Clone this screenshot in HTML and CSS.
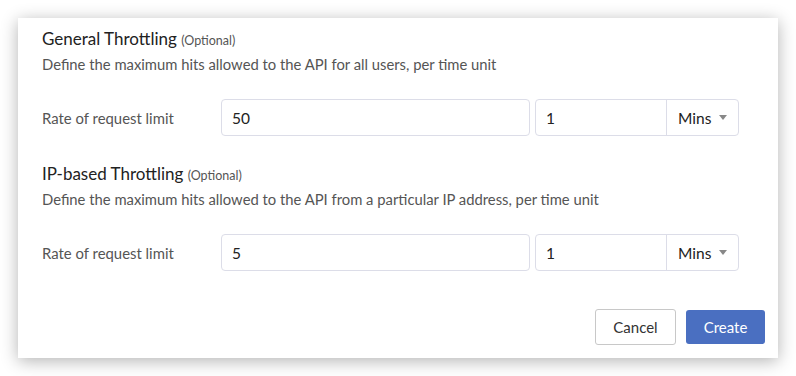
FILE: index.html
```html
<!DOCTYPE html>
<html lang="en">
<head>
  <meta charset="UTF-8" />
  <title>Throttling</title>
  <link rel="stylesheet" href="styles.css">
</head>
<body>

  <div class="card">
    <div class="section">
      <h3>General Throttling <span class="opt">(Optional)</span></h3>
      <p class="desc">Define the maximum hits allowed to the API for all users, per time unit</p>
      <div class="row">
        <label>Rate of request limit</label>
        <div class="field">50</div>
        <div class="group">
          <div class="num">1</div>
          <div class="unit">Mins <span class="caret"></span></div>
        </div>
      </div>
    </div>

    <div class="section second">
      <h3>IP-based Throttling <span class="opt">(Optional)</span></h3>
      <p class="desc">Define the maximum hits allowed to the API from a particular IP address, per time unit</p>
      <div class="row">
        <label>Rate of request limit</label>
        <div class="field">5</div>
        <div class="group">
          <div class="num">1</div>
          <div class="unit">Mins <span class="caret"></span></div>
        </div>
      </div>
    </div>

    <div class="actions">
      <button class="btn cancel">Cancel</button>
      <button class="btn create">Create</button>
    </div>
  </div>

</body>
</html>
```

FILE: styles.css
```css
* {
  box-sizing: border-box;
}

body {
  margin: 0;
  background-color: #fff;
  font-family: 'Lato', sans-serif;
}

.card {
  margin: 18px;
  width: 760px;
  height: 340px;
  background-color: #fff;
  box-shadow: 0 3px 16px rgba(0,0,0,0.3);
  padding: 11px 13px 13px 24px;
  display: flex;
  flex-direction: column;
}

.section.second {
  margin-top: 28px;
}

h3 {
  margin: 0;
  font-size: 17px;
  line-height: 20px;
  font-weight: 400;
  color: #222;
}

.opt {
  font-size: 12.5px;
  color: #555;
}

.desc {
  margin: 4px 0 0;
  font-size: 14.8px;
  line-height: 18px;
  color: #555;
}

.row {
  display: flex;
  align-items: center;
  margin-top: 26px;
  height: 37px;
}

.row label {
  width: 179px;
  font-size: 14.9px;
  color: #555;
}

.field,
.group {
  height: 37px;
  border: 1px solid #dcdde8;
  border-radius: 4px;
  font-size: 15.5px;
  color: #222;
}

.field {
  width: 309px;
  padding: 0 10px;
  display: flex;
  align-items: center;
}

.group {
  width: 204px;
  margin-left: 5px;
  display: flex;
}

.num {
  width: 131px;
  padding: 0 10px;
  display: flex;
  align-items: center;
  border-right: 1px solid #dcdde8;
}

.unit {
  flex: 1;
  padding: 0 11px;
  display: flex;
  align-items: center;
  justify-content: space-between;
}

.caret {
  width: 0;
  height: 0;
  border-left: 4.5px solid transparent;
  border-right: 4.5px solid transparent;
  border-top: 5px solid #888;
}

.actions {
  margin-top: auto;
  display: flex;
  justify-content: flex-end;
  gap: 10px;
}

.btn {
  font-family: 'Lato', sans-serif;
  font-size: 15px;
  border-radius: 3px;
  cursor: pointer;
}

.cancel {
  width: 81px;
  height: 36px;
  background-color: #fff;
  border: 1px solid #c8c8c8;
  color: #333;
}

.create {
  width: 79px;
  height: 34px;
  margin-top: 1px;
  background-color: #4a6fc1;
  border: none;
  color: #fff;
}
```
